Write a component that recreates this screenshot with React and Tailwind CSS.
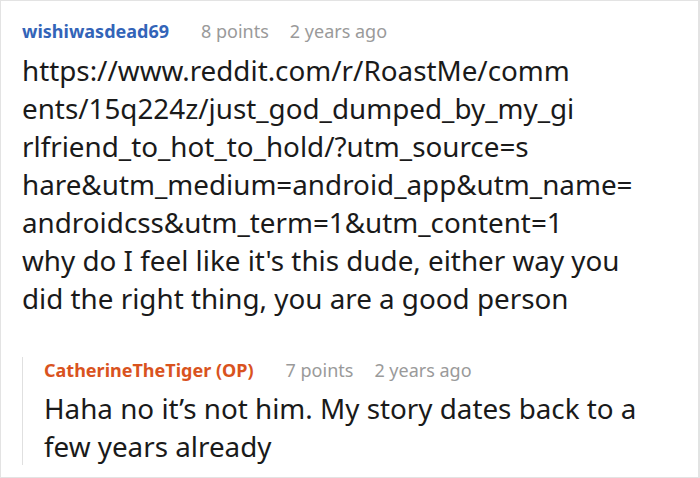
import React from 'react';

const font = { fontFamily: '"Noto Sans", "Open Sans", sans-serif' };

const Meta = ({ name, nameClass, points, time }) => (
  <div className="flex items-baseline h-[26px] text-[18px]">
    <span className={`font-bold ${nameClass}`}>{name}</span>
    <span className="ml-[32px] text-[#9a9a9a]">{points}</span>
    <span className="ml-[21px] text-[#9a9a9a]">{time}</span>
  </div>
);

const App = () => {
  return (
    <div
      className="w-[700px] h-[478px] bg-white border border-[#e3e3e3] border-r-2 overflow-hidden text-[#1a1a1a]"
      style={font}
    >
      <div className="pl-[21px] pr-4 pt-[17px]">
        <Meta
          name="wishiwasdead69"
          nameClass="text-[#3364b8]"
          points="8 points"
          time="2 years ago"
        />
        <p className="text-[27.8px] leading-[38px] mt-[7px] whitespace-nowrap">
          https://www.reddit.com/r/RoastMe/comm
          <br />
          ents/15q224z/just_god_dumped_by_my_gi
          <br />
          rlfriend_to_hot_to_hold/?utm_source=s
          <br />
          hare&amp;utm_medium=android_app&amp;utm_name=
          <br />
          androidcss&amp;utm_term=1&amp;utm_content=1
          <br />
          why do I feel like it's this dude, either way you
          <br />
          did the right thing, you are a good person
        </p>

        <div className="mt-[52px] border-l border-[#e0e0e0] pl-[21px]">
          <div className="-mt-[12px]">
            <Meta
              name="CatherineTheTiger (OP)"
              nameClass="text-[#d9531e]"
              points="7 points"
              time="2 years ago"
            />
          </div>
          <p className="text-[27.8px] leading-[38px] mt-[6px] -mb-[7px] whitespace-nowrap">
            Haha no it’s not him. My story dates back to a
            <br />
            few years already
          </p>
        </div>
      </div>
    </div>
  );
};

export default App;
